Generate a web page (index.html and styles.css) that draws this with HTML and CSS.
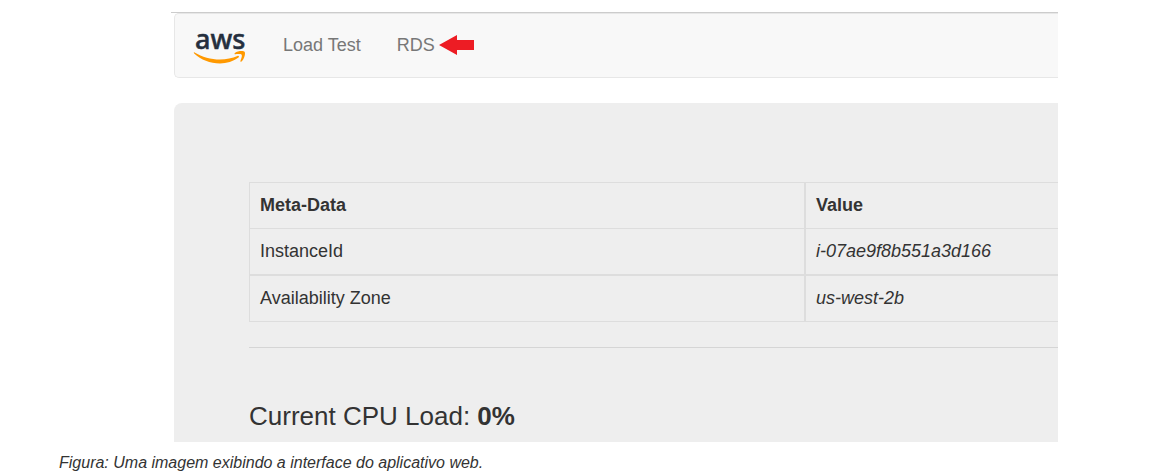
FILE: index.html
```html
<!DOCTYPE html>
<html lang="pt-BR">
<head>
<meta charset="utf-8">
<meta name="viewport" content="width=device-width, initial-scale=1">
<title>Load Test</title>
<link rel="stylesheet" href="styles.css">
</head>
<body>
<figure class="figure">
  <div class="app">
    <nav class="navbar">
      <a class="brand" href="#" aria-label="aws">
        <svg class="brand-logo" viewBox="0 0 54 40" aria-hidden="true">
          <text class="brand-word" x="2" y="24">aws</text>
          <path fill="#ff9900" d="M1.600 27.400C9 31.800 18 34.400 27 34.400c6 0 12.500-1.300 17.500-3.500 1.200-.5 2.100.8 1 1.700C40.500 36.400 33.500 38.500 27 38.500 17 38.500 8 35 1.200 28.600c-.7-.7-.4-1.600.4-1.200z"/>
          <path fill="#ff9900" d="M41.900 27.900c3-2.300 9-2.200 9.800-1 .9 1.300-.3 7-3.200 9.500-.7.6-1.400.3-1.100-.5.700-1.800 2-5.200 1.200-6.200-.7-.9-4.500-.7-6.200-.4-.9.100-1.200-.9-.5-1.400z"/>
        </svg>
      </a>
      <a class="nav-link" href="#">Load Test</a>
      <a class="nav-link nav-marked" href="#">RDS
        <svg class="marker" viewBox="0 0 35 20" aria-hidden="true"><path fill="#ed1c24" d="M0 10 18 0v5h17v10H18v5z"/></svg>
      </a>
    </nav>
    <main class="panel">
      <table class="meta">
        <thead>
          <tr><th class="key" scope="col">Meta-Data</th><th scope="col">Value</th></tr>
        </thead>
        <tbody>
          <tr><td class="key">InstanceId</td><td><i>i-07ae9f8b551a3d166</i></td></tr>
          <tr><td class="key">Availability Zone</td><td><i>us-west-2b</i></td></tr>
        </tbody>
      </table>
      <hr class="rule">
      <p class="load">Current CPU Load: <b>0%</b></p>
    </main>
  </div>
  <figcaption class="caption">Figura: Uma imagem exibindo a interface do aplicativo web.</figcaption>
</figure>
</body>
</html>
```
FILE: styles.css
```css
* { box-sizing: border-box; }

body {
  margin: 0;
  background: #fff;
  color: #333;
  font-family: "Liberation Sans", Arial, sans-serif;
  font-size: 18px;
  line-height: 26px;
}

.figure {
  margin: 0;
  padding: 12px 118px 0 59px;
}

.app {
  margin-left: 112px;
  padding-left: 3px;
  border-top: 1px solid #ccc;
}

.navbar {
  display: flex;
  align-items: center;
  gap: 36px;
  height: 65px;
  padding: 0 0 2px 18px;
  border: 1px solid #e7e7e7;
  border-right: 0;
  border-radius: 5px 0 0 5px;
  background: #f8f8f8;
}

.brand { display: flex; }

.brand-logo {
  width: 54px;
  height: 40px;
  overflow: visible;
}

.brand-word {
  fill: #252f3e;
  font-family: "Noto Sans", "Open Sans", sans-serif;
  font-size: 27px;
  font-weight: 500;
  stroke: #252f3e;
  stroke-width: 0.5px;
}

.nav-link {
  color: #777;
  text-decoration: none;
}

.nav-marked {
  display: flex;
  align-items: center;
  gap: 4px;
}

.marker {
  width: 35px;
  height: 20px;
}

.panel {
  margin-top: 25px;
  padding: 79px 0 9px 75px;
  border-radius: 8px 0 0 0;
  background: #eee;
}

.meta {
  width: 100%;
  border-collapse: separate;
  border-spacing: 0;
  border: solid #ddd;
  border-width: 1px 0 1px 1px;
}

.meta th,
.meta td {
  padding: 10px;
  text-align: left;
  font-size: 18px;
  line-height: 25px;
}

.meta .key {
  width: 68.8%;
  border-right: 2px solid #ddd;
}

.meta th { border-bottom: 1px solid #ddd; }

.meta tr:first-child td { border-bottom: 2px solid #ddd; }

.rule {
  margin: 25px 0 51px;
  border: 0;
  border-top: 1px solid #d5d5d5;
}

.load {
  margin: 0;
  font-size: 26px;
  line-height: 34px;
}

.caption {
  padding-top: 10px;
  font-size: 16px;
  font-style: italic;
  line-height: 22px;
}
```
